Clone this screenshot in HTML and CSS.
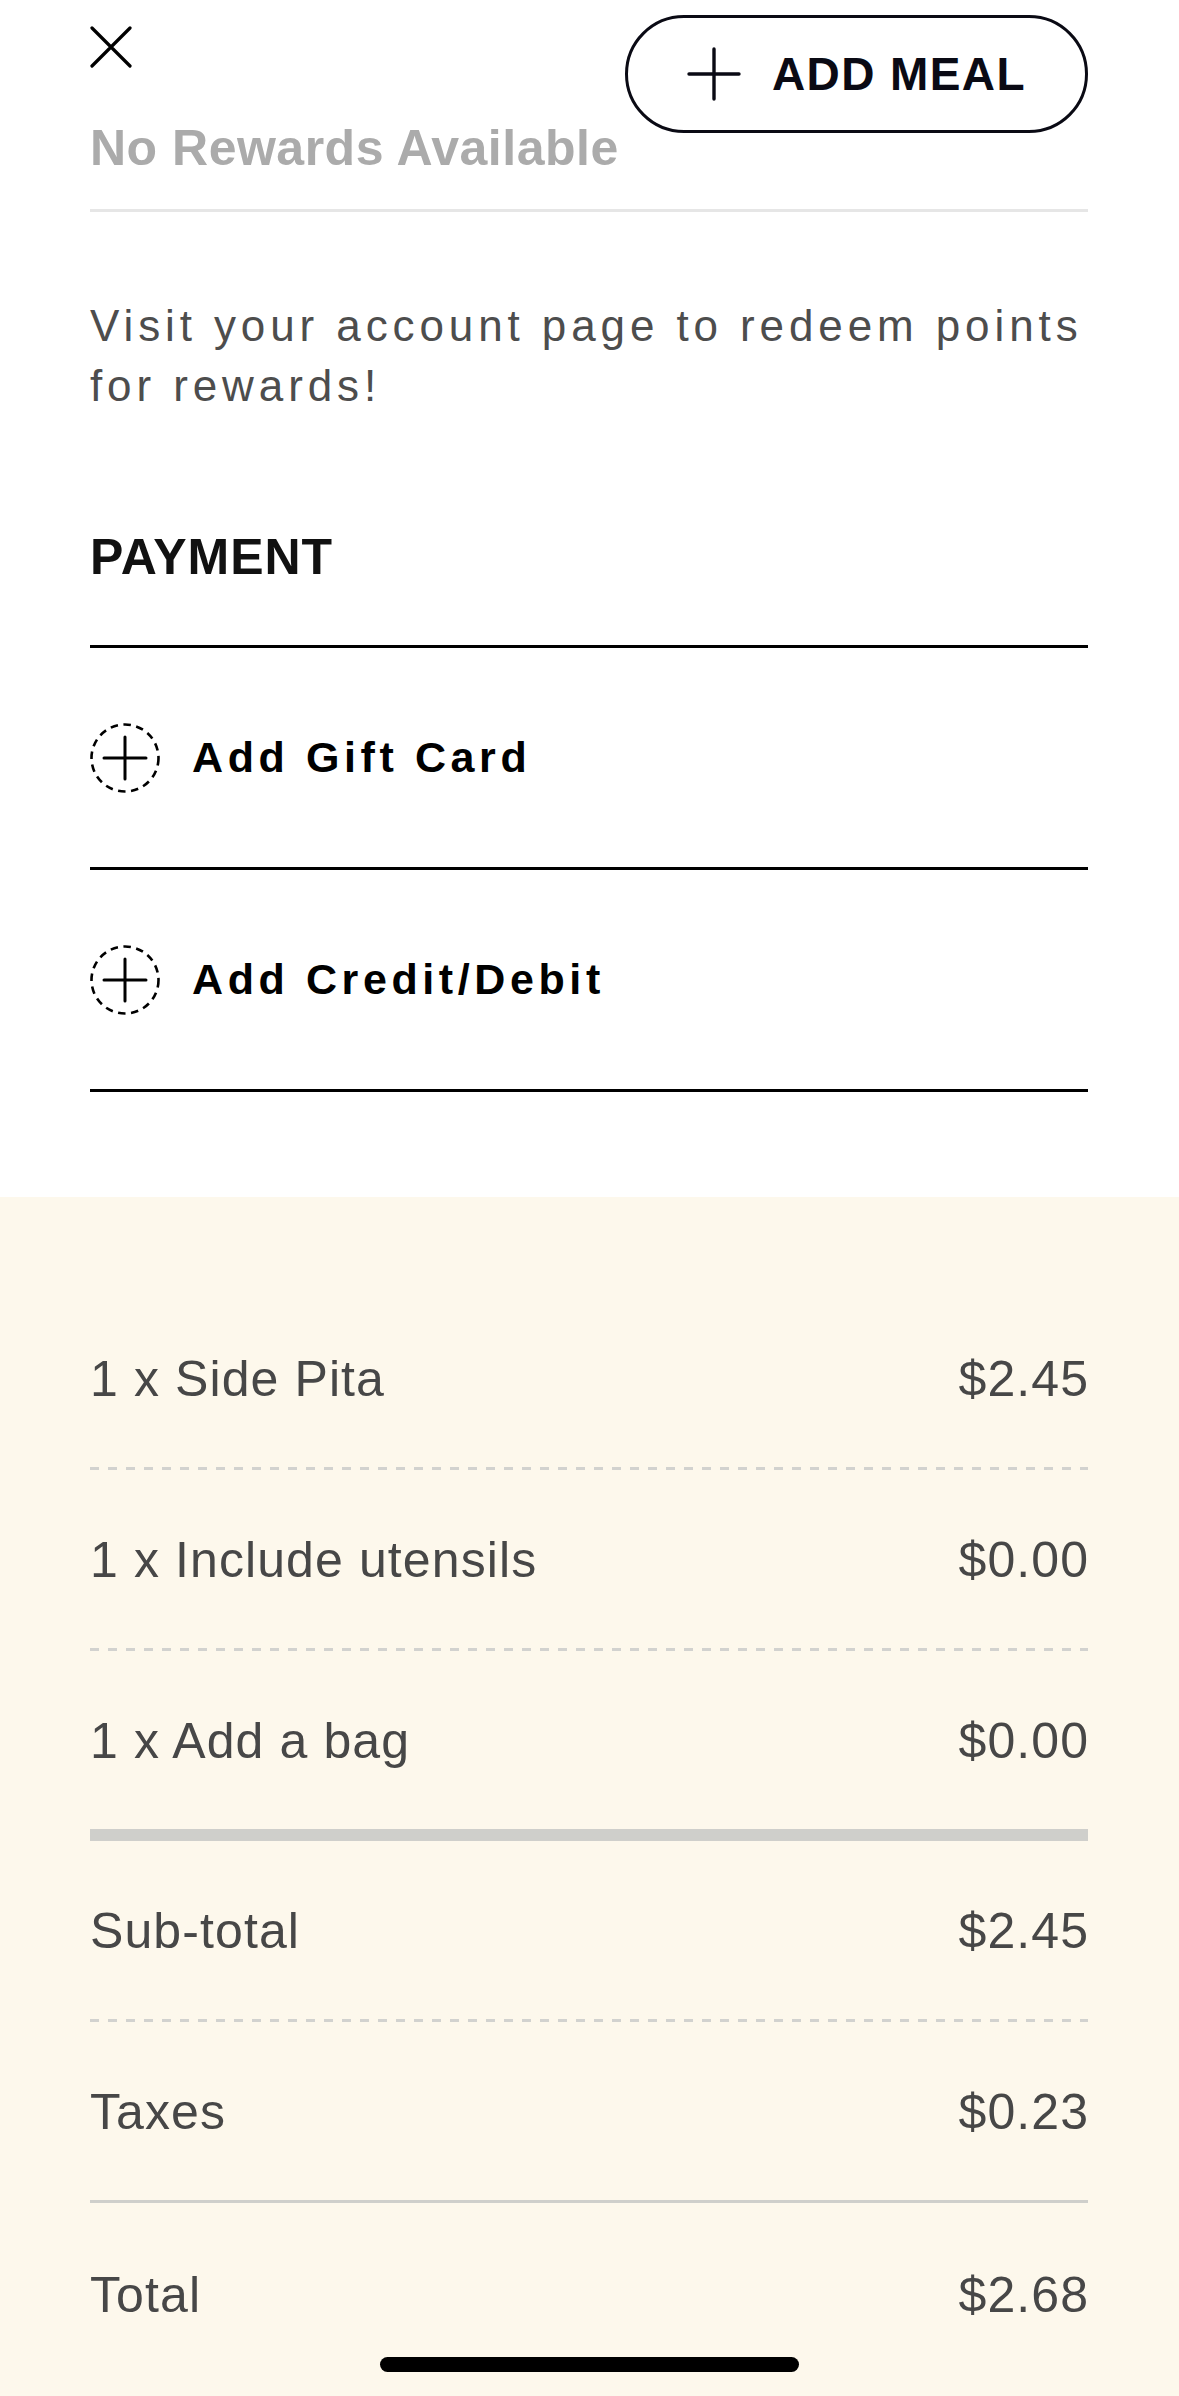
FILE: index.html
```html
<!DOCTYPE html>
<html lang="en">
<head>
<meta charset="utf-8">
<title>Checkout</title>
<link rel="stylesheet" href="styles.css">
</head>
<body>
<div class="screen">
  <header class="topbar">
    <button class="close-btn" aria-label="Close">
      <svg width="42" height="42" viewBox="0 0 42 42"><path d="M2 2 L40 40 M40 2 L2 40" fill="none" stroke="#000" stroke-width="3.2" stroke-linecap="round"/></svg>
    </button>
    <button class="add-meal">
      <svg width="54" height="54" viewBox="0 0 54 54"><path d="M27 2 V52 M2 27 H52" fill="none" stroke="#0a0a14" stroke-width="3.4" stroke-linecap="round"/></svg>
      <span>ADD MEAL</span>
    </button>
  </header>

  <main class="content">
    <div class="rewards">No Rewards Available</div>
    <p class="visit">Visit your account page to redeem points for rewards!</p>

    <h2 class="section-title">PAYMENT</h2>
    <ul class="pay-list">
      <li class="pay-row">
        <svg class="dash-icon" width="70" height="70" viewBox="0 0 70 70"><circle cx="35" cy="35" r="33.5" fill="none" stroke="#000" stroke-width="2.6" stroke-dasharray="7.5 5.5"/><path d="M35 14 V56 M14 35 H56" fill="none" stroke="#000" stroke-width="3" stroke-linecap="round"/></svg>
        <span>Add Gift Card</span>
      </li>
      <li class="pay-row">
        <svg class="dash-icon" width="70" height="70" viewBox="0 0 70 70"><circle cx="35" cy="35" r="33.5" fill="none" stroke="#000" stroke-width="2.6" stroke-dasharray="7.5 5.5"/><path d="M35 14 V56 M14 35 H56" fill="none" stroke="#000" stroke-width="3" stroke-linecap="round"/></svg>
        <span>Add Credit/Debit</span>
      </li>
    </ul>
  </main>

  <section class="summary">
    <div class="line dashed"><span>1 x Side Pita</span><span>$2.45</span></div>
    <div class="line dashed"><span>1 x Include utensils</span><span>$0.00</span></div>
    <div class="line bar"><span>1 x Add a bag</span><span>$0.00</span></div>
    <div class="line dashed"><span>Sub-total</span><span>$2.45</span></div>
    <div class="line solid"><span>Taxes</span><span>$0.23</span></div>
    <div class="line"><span>Total</span><span>$2.68</span></div>
  </section>

  <div class="home-indicator"></div>
</div>
</body>
</html>
```

FILE: styles.css
```css
* { box-sizing: border-box; }

html, body {
  margin: 0;
  padding: 0;
  background: #fdf8ec;
}

body {
  font-family: "Liberation Sans", Arial, sans-serif;
  color: #000;
}

.screen {
  position: relative;
  width: 1179px;
  min-height: 2396px;
  background: #fdf8ec;
  overflow: hidden;
}

.topbar {
  position: absolute;
  top: 0;
  left: 0;
  right: 0;
  height: 0;
  z-index: 2;
}

.close-btn {
  position: absolute;
  left: 90px;
  top: 26px;
  width: 42px;
  height: 42px;
  padding: 0;
  border: 0;
  background: transparent;
  display: block;
}

.close-btn svg { display: block; }

.add-meal {
  position: absolute;
  left: 625px;
  top: 15px;
  width: 463px;
  height: 118px;
  border: 3px solid #0a0a14;
  border-radius: 59px;
  background: #fff;
  display: flex;
  align-items: center;
  gap: 31px;
  padding: 0 0 0 59px;
  font-family: "Liberation Sans", Arial, sans-serif;
  font-weight: 700;
  font-size: 46px;
  letter-spacing: 1.4px;
  color: #0a0a14;
}

.add-meal svg { display: block; flex: none; }

.content {
  background: #fff;
  padding: 118px 91px 105px 90px;
}

.rewards {
  font-size: 50px;
  line-height: 60px;
  font-weight: 700;
  letter-spacing: 0.5px;
  color: #ababab;
  padding-bottom: 31px;
  border-bottom: 3px solid #e6e6e6;
}

.visit {
  margin: 84px 0 0;
  font-size: 44px;
  line-height: 60px;
  letter-spacing: 4.9px;
  color: #4d4d4d;
}

.section-title {
  margin: 111px 0 58px;
  font-size: 50px;
  line-height: 60px;
  font-weight: 700;
  letter-spacing: 1px;
  color: #111;
}

.pay-list {
  list-style: none;
  margin: 0;
  padding: 0;
  border-top: 3px solid #000;
}

.pay-row {
  height: 222px;
  display: flex;
  align-items: center;
  gap: 32px;
  border-bottom: 3px solid #000;
  font-size: 43px;
  font-weight: 700;
  letter-spacing: 4.6px;
  color: #000;
}

.dash-icon { display: block; flex: none; }

.summary {
  padding: 92px 91px 0 90px;
  background: #fdf8ec;
}

.line {
  position: relative;
  height: 181px;
  display: flex;
  align-items: center;
  justify-content: space-between;
  font-size: 50px;
  letter-spacing: 1.1px;
  color: #474747;
  padding-top: 2px;
}

.line span:last-child { margin-right: -1.1px; }

.line.dashed { padding-bottom: 3px; }
.line.dashed::after {
  content: "";
  position: absolute;
  left: 0;
  right: 0;
  bottom: 0;
  height: 3px;
  background: repeating-linear-gradient(90deg, #d2d2cf 0 9px, transparent 9px 18px);
}
.line.solid { border-bottom: 3px solid #cfcfcb; }
.line.bar { height: 190px; border-bottom: 12px solid #cfcfcb; }

.home-indicator {
  position: absolute;
  left: 380px;
  bottom: 24px;
  width: 419px;
  height: 15px;
  border-radius: 8px;
  background: #000;
}
```
